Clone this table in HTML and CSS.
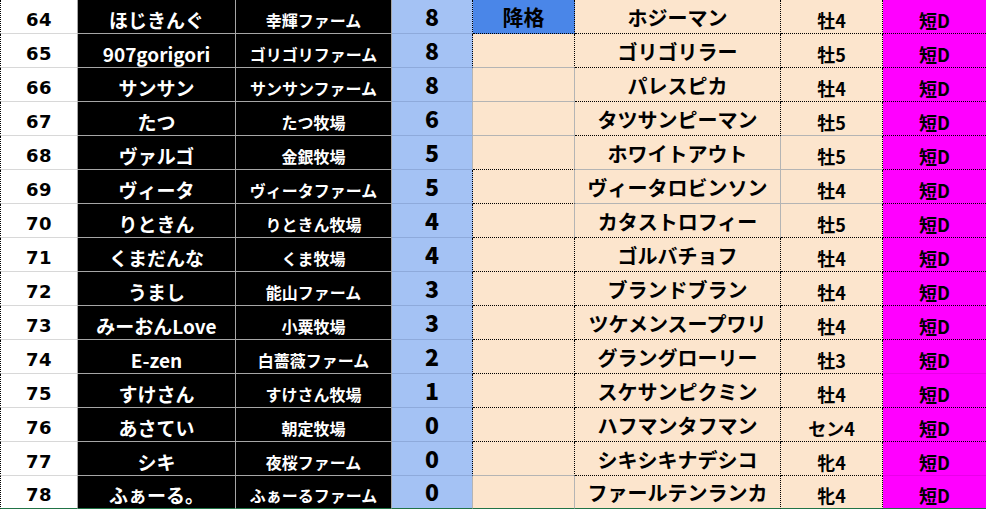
FILE: index.html
```html
<!DOCTYPE html>
<html lang="ja">
<head>
<meta charset="utf-8">
<title>Sheet</title>
<link rel="stylesheet" href="styles.css">
</head>
<body>
<div class="sheet">
  <!-- r0 -->
  <div class="c c0">64</div><div class="c c1">ほじきんぐ</div><div class="c c2">幸輝ファーム</div><div class="c c3 dr">8</div><div class="c c4 demote dr db">降格</div><div class="c c5 dr db">ホジーマン</div><div class="c c6 dr db">牡4</div><div class="c c7 db">短D</div>
  <!-- r1 -->
  <div class="c c0">65</div><div class="c c1">907gorigori</div><div class="c c2">ゴリゴリファーム</div><div class="c c3 dr">8</div><div class="c c4 dr"></div><div class="c c5 dr db">ゴリゴリラー</div><div class="c c6 dr db">牡5</div><div class="c c7 db">短D</div>
  <!-- r2 -->
  <div class="c c0">66</div><div class="c c1">サンサン</div><div class="c c2">サンサンファーム</div><div class="c c3">8</div><div class="c c4"></div><div class="c c5 dr db">パレスピカ</div><div class="c c6 dr db">牡4</div><div class="c c7 db">短D</div>
  <!-- r3 -->
  <div class="c c0">67</div><div class="c c1">たつ</div><div class="c c2">たつ牧場</div><div class="c c3">6</div><div class="c c4"></div><div class="c c5 dr db">タツサンピーマン</div><div class="c c6 dr">牡5</div><div class="c c7 db">短D</div>
  <!-- r4 -->
  <div class="c c0">68</div><div class="c c1">ヴァルゴ</div><div class="c c2">金銀牧場</div><div class="c c3">5</div><div class="c c4 db"></div><div class="c c5">ホワイトアウト</div><div class="c c6 dr">牡5</div><div class="c c7 db">短D</div>
  <!-- r5 -->
  <div class="c c0">69</div><div class="c c1">ヴィータ</div><div class="c c2">ヴィータファーム</div><div class="c c3 dr">5</div><div class="c c4 db"></div><div class="c c5">ヴィータロビンソン</div><div class="c c6 dr">牡4</div><div class="c c7 db">短D</div>
  <!-- r6 -->
  <div class="c c0">70</div><div class="c c1">りときん</div><div class="c c2">りときん牧場</div><div class="c c3 dr">4</div><div class="c c4 db"></div><div class="c c5 db">カタストロフィー</div><div class="c c6 dr db">牡5</div><div class="c c7 db">短D</div>
  <!-- r7 -->
  <div class="c c0">71</div><div class="c c1">くまだんな</div><div class="c c2">くま牧場</div><div class="c c3 dr">4</div><div class="c c4 dr db"></div><div class="c c5 dr db">ゴルバチョフ</div><div class="c c6 dr db">牡4</div><div class="c c7 db">短D</div>
  <!-- r8 -->
  <div class="c c0">72</div><div class="c c1">うまし</div><div class="c c2">能山ファーム</div><div class="c c3 dr">3</div><div class="c c4 dr db"></div><div class="c c5 dr db">ブランドブラン</div><div class="c c6 dr db">牡4</div><div class="c c7 db">短D</div>
  <!-- r9 -->
  <div class="c c0">73</div><div class="c c1">みーおんLove</div><div class="c c2">小粟牧場</div><div class="c c3 dr">3</div><div class="c c4 dr db"></div><div class="c c5 dr db">ツケメンスープワリ</div><div class="c c6 dr db">牡4</div><div class="c c7 db">短D</div>
  <!-- r10 -->
  <div class="c c0">74</div><div class="c c1">E-zen</div><div class="c c2">白薔薇ファーム</div><div class="c c3 dr">2</div><div class="c c4 dr db"></div><div class="c c5 dr db">グラングローリー</div><div class="c c6 dr db">牡3</div><div class="c c7">短D</div>
  <!-- r11 -->
  <div class="c c0">75</div><div class="c c1">すけさん</div><div class="c c2">すけさん牧場</div><div class="c c3 dr">1</div><div class="c c4 dr db"></div><div class="c c5 dr db">スケサンピクミン</div><div class="c c6 dr db">牡4</div><div class="c c7 db">短D</div>
  <!-- r12 -->
  <div class="c c0">76</div><div class="c c1">あさてい</div><div class="c c2">朝定牧場</div><div class="c c3 dr">0</div><div class="c c4 dr db"></div><div class="c c5 dr db">ハフマンタフマン</div><div class="c c6 dr db">セン4</div><div class="c c7 db">短D</div>
  <!-- r13 -->
  <div class="c c0">77</div><div class="c c1">シキ</div><div class="c c2">夜桜ファーム</div><div class="c c3 dr">0</div><div class="c c4 dr"></div><div class="c c5 dr db">シキシキナデシコ</div><div class="c c6 dr db">牝4</div><div class="c c7">短D</div>
  <!-- r14 -->
  <div class="c c0 last">78</div><div class="c c1 last">ふぁーる。</div><div class="c c2 last">ふぁーるファーム</div><div class="c c3 last">0</div><div class="c c4 last"></div><div class="c c5 dr last">ファールテンランカ</div><div class="c c6 dr last">牝4</div><div class="c c7 last">短D</div>
</div>
</body>
</html>
```

FILE: styles.css
```css
* { box-sizing: border-box; }
html, body { margin: 0; padding: 0; background: #ffffff; }
body { overflow: hidden; }

.sheet {
  display: grid;
  grid-template-columns: 78px 158px 156px 81px 102px 206px 102px 103px;
  grid-template-rows: repeat(14, 34px) 33px;
  width: 986px;
  font-family: "Noto Sans CJK JP", "Noto Sans", sans-serif;
  font-weight: 700;
  color: #000;
}

.c {
  display: flex;
  justify-content: center;
  align-items: flex-end;
  line-height: 1;
  white-space: nowrap;
  border-right: 1px solid #b4b4b4;
  border-bottom: 1px solid #b4b4b4;
}

.c0 {
  background: #ffffff;
  border-left: 1px dotted #000;
  border-bottom-color: #d8d8d8;
  border-right-color: #a8a8a8;
  font-family: "DejaVu Sans", sans-serif;
  font-weight: 700;
  font-size: 18px;
  letter-spacing: 0.5px;
  padding-bottom: 4px;
}

.c1, .c2 {
  background: #000000;
  color: #ffffff;
  border-color: #a6a6a6;
}
.c1 { font-size: 19px; padding-bottom: 4px; }
.c2 { font-size: 16px; padding-bottom: 5px; }

.c3 {
  background: #a4c2f4;
  border-bottom-color: #8eaadb;
  font-size: 23px;
  font-weight: 900;
  padding-bottom: 5px;
}

.c4, .c5, .c6 { background: #fce5cd; }
.c4 { font-size: 21px; padding-bottom: 6px; }
.c4.demote { background: #4a86e8; }
.c5 { font-size: 20px; padding-bottom: 5px; }
.c6 { font-size: 18px; padding-bottom: 4px; }

.c7 {
  background: #ff00ff;
  border-right: none;
  border-bottom-color: #e800e8;
  font-size: 18px;
  padding-bottom: 4px;
}

.dr { border-right: 1px dotted #000; }
.db { border-bottom: 1px dotted #000; }

.last { border-bottom: 1px solid #217346; }
```
